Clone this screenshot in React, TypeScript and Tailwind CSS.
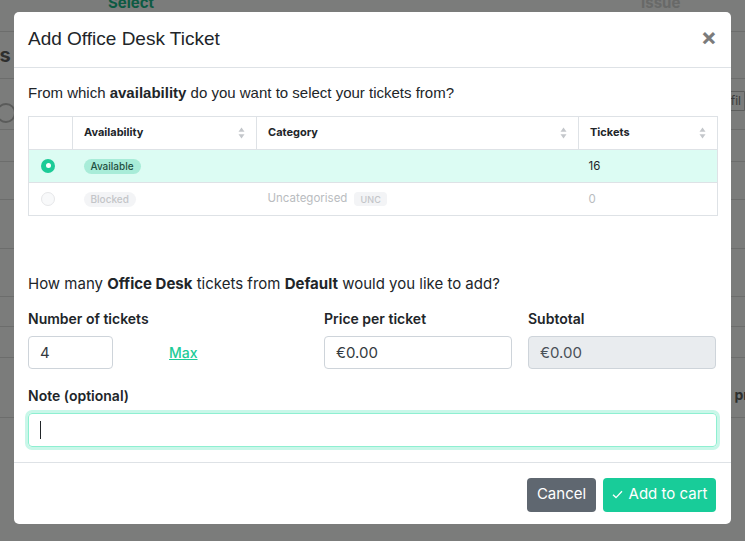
import React from "react";

const SortIcon = () => (
  <svg width="7" height="12" viewBox="0 0 7 12" className="shrink-0">
    <path d="M3.5 0.5 L6.5 4.8 H0.5 Z" fill="#c4c7cb" />
    <path d="M3.5 11.5 L6.5 7.2 H0.5 Z" fill="#c4c7cb" />
  </svg>
);

const HeaderCell = ({ label, width }: { label?: string; width: string }) => (
  <th className={`${width} h-[33px] border-l border-[#dee2e6] px-[11px] text-left align-middle first:border-l-0`}>
    {label && (
      <div className="flex items-center justify-between">
        <span className="text-[11px] font-bold text-[#212529]">{label}</span>
        <SortIcon />
      </div>
    )}
  </th>
);

const Background = () => (
  <div className="flex h-[541px] w-[745px] flex-col bg-[#7b7c7b] font-['Inter',sans-serif]">
    <div className="flex h-[32px] border-b border-[#6c6d6c]">
      <span className="ml-[108px] -mt-[8px] text-[15px] font-bold text-[#0d5a43]">Select</span>
      <span className="ml-[487px] -mt-[8px] text-[15px] font-bold text-[#686968]">Issue</span>
    </div>
    <div className="flex h-[47px] items-center border-b border-[#6c6d6c]">
      <span className="-ml-[6px] text-[20px] font-bold text-[#2e2f2e]">ls</span>
    </div>
    <div className="flex h-[51px] items-end justify-between border-b border-[#6c6d6c] pb-[6px]">
      <span className="-ml-[4px] h-[20px] w-[20px] rounded-full border-2 border-[#5a5b5a]" />
      <span className="mb-[12px] rounded-l-[3px] border border-[#5d5e5d] px-[3px] text-[12px] text-[#3a3b3a]">fil</span>
    </div>
    <div className="h-[32px] border-b border-[#6c6d6c]" />
    <div className="h-[38px] border-b border-[#6c6d6c]" />
    <div className="h-[49px] border-b border-[#6c6d6c]" />
    <div className="h-[48px] border-b border-[#6c6d6c]" />
    <div className="h-[30px] border-b border-[#6c6d6c]" />
    <div className="h-[31px] border-b border-[#6c6d6c]" />
    <div className="flex h-[60px] items-end justify-end border-b border-[#6c6d6c] pb-[12px]">
      <span className="-mr-[4px] text-[14px] font-bold text-[#2e2f2e]">pr</span>
    </div>
  </div>
);

export default function App() {
  return (
    <div className="relative h-[541px] w-[745px] overflow-hidden">
      <Background />
      <div className="absolute left-[14px] top-[12px] flex h-[512px] w-[717px] flex-col rounded-[5px] bg-white font-['Inter',sans-serif] text-[#212529]">
        <div className="flex h-[56px] items-center justify-between border-b border-[#dee2e6] px-[14px]">
          <h2 className="font-['Liberation_Sans',Arial,sans-serif] text-[19px] text-[#212529]">Add Office Desk Ticket</h2>
          <span className="-mt-[5px] text-[24px] font-bold leading-none text-[#7b7b7b]">×</span>
        </div>

        <div className="flex flex-1 flex-col px-[14px] pt-[14px]">
          <p className="font-['Liberation_Sans',Arial,sans-serif] text-[15px]">
            From which <b>availability</b> do you want to select your tickets from?
          </p>
          <table className="mt-[11px] w-[689px] table-fixed border-collapse border border-[#dee2e6]">
            <thead>
              <tr className="border-b border-[#dee2e6]">
                <HeaderCell width="w-[44px]" />
                <HeaderCell width="w-[184px]" label="Availability" />
                <HeaderCell width="w-[322px]" label="Category" />
                <HeaderCell width="w-[139px]" label="Tickets" />
              </tr>
            </thead>
            <tbody>
              <tr className="h-[33px] border-b border-[#dee2e6] bg-[#dcfcf3]">
                <td className="pl-[12px]">
                  <span className="flex h-[14px] w-[14px] items-center justify-center rounded-full bg-[#1ccb97]">
                    <span className="h-[5px] w-[5px] rounded-full bg-white" />
                  </span>
                </td>
                <td className="px-[11px] pt-[1px]">
                  <div className="flex items-center">
                    <span className="flex h-[15px] items-center rounded-full bg-[#a8ecd8] px-[7px] text-[10px] font-medium leading-none text-[#1f4f41]">Available</span>
                  </div>
                </td>
                <td />
                <td className="px-[10px] pt-[2px] text-[11.5px] text-[#212529]">16</td>
              </tr>
              <tr className="h-[33px]">
                <td className="pl-[12px]">
                  <span className="block h-[14px] w-[14px] rounded-full border border-[#e6e7e9] bg-[#f8f9fa]" />
                </td>
                <td className="px-[11px] pt-[1px]">
                  <div className="flex items-center">
                    <span className="flex h-[15px] items-center rounded-full bg-[#f3f4f6] px-[7px] text-[10px] font-medium leading-none text-[#c3c5c8]">Blocked</span>
                  </div>
                </td>
                <td className="px-[11px] pt-[1px]">
                  <div className="flex items-center">
                    <span className="text-[11.5px] text-[#b9bcc0]">Uncategorised</span>
                    <span className="ml-[7px] flex h-[14px] items-center rounded-[4px] bg-[#f3f4f6] px-[6px] text-[9px] font-medium leading-none tracking-wide text-[#c3c5c8]">UNC</span>
                  </div>
                </td>
                <td className="px-[10px] pt-[2px] text-[11.5px] text-[#b9bcc0]">0</td>
              </tr>
            </tbody>
          </table>

          <p className="mt-[57px] text-[15px]">
            How many <b>Office Desk</b> tickets from <b>Default</b> would you like to add?
          </p>

          <div className="mt-[13px] grid grid-cols-[280px_188px_188px] gap-x-[16px]">
            <div className="flex flex-col">
              <label className="text-[14px] font-semibold">Number of tickets</label>
              <div className="mt-[7px] flex items-center">
                <input
                  readOnly
                  value="4"
                  className="h-[33px] w-[85px] rounded-[4px] border border-[#ced4da] px-[11px] text-[15px] text-[#343a40] outline-none"
                />
                <a href="#" className="ml-[56px] text-[14px] font-medium text-[#1ccb97] underline">
                  Max
                </a>
              </div>
            </div>
            <div className="flex flex-col">
              <label className="text-[14px] font-semibold">Price per ticket</label>
              <input
                readOnly
                value="€0.00"
                className="mt-[7px] h-[33px] w-[188px] rounded-[4px] border border-[#ced4da] px-[11px] text-[15px] text-[#343a40] outline-none"
              />
            </div>
            <div className="flex flex-col">
              <label className="text-[14px] font-semibold">Subtotal</label>
              <input
                readOnly
                value="€0.00"
                className="mt-[7px] h-[33px] w-[188px] rounded-[4px] border border-[#ced4da] bg-[#e9ecef] px-[11px] text-[15px] text-[#495057] outline-none"
              />
            </div>
          </div>

          <label className="mt-[16px] text-[14px] font-semibold">Note (optional)</label>
          <div className="mt-[7px] flex h-[34px] w-[689px] items-center rounded-[4px] border border-[#8eefd1] px-[11px] shadow-[0_0_0_3px_#c9f7e9]">
            <span className="h-[18px] w-px bg-[#212529]" />
          </div>
        </div>

        <div className="flex h-[62px] items-center justify-end gap-[7px] border-t border-[#dee2e6] px-[15px] pt-[2px]">
          <button className="h-[34px] w-[69px] rounded-[4px] bg-[#5f6770] text-[15px] text-white">Cancel</button>
          <button className="flex h-[34px] w-[113px] items-center justify-center gap-[6px] rounded-[4px] bg-[#18cc99] text-[15px] text-white">
            <svg width="11" height="9" viewBox="0 0 11 9">
              <path d="M1 4.8 L4 7.6 L10 1.2" fill="none" stroke="white" strokeWidth="1.3" />
            </svg>
            Add to cart
          </button>
        </div>
      </div>
    </div>
  );
}
